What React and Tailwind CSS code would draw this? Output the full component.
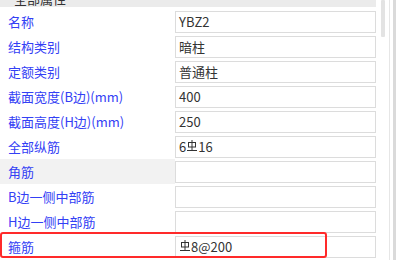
import React from "react";

const rows = [
  { label: "名称", value: "YBZ2" },
  { label: "结构类别", value: "暗柱" },
  { label: "定额类别", value: "普通柱" },
  { label: "截面宽度(B边)(mm)", value: "400" },
  { label: "截面高度(H边)(mm)", value: "250" },
  { label: "全部纵筋", value: ["6", "bar", "16"] },
  { label: "角筋", value: "", hover: true },
  { label: "B边一侧中部筋", value: "" },
  { label: "H边一侧中部筋", value: "" },
  { label: "箍筋", value: ["bar", "8@200"], marked: true },
];

const BarSymbol = () => (
  <svg width="10" height="12" viewBox="0 0 10 12" className="inline-block mx-[1px] -mt-[2px]">
    <rect x="1.5" y="2.5" width="7" height="4.5" fill="none" stroke="#333" strokeWidth="1" />
    <line x1="5" y1="0" x2="5" y2="11" stroke="#333" strokeWidth="1" />
    <line x1="0" y1="10.5" x2="10" y2="10.5" stroke="#333" strokeWidth="1" />
  </svg>
);

const Value = ({ value }) => {
  if (Array.isArray(value)) {
    return value.map((v, i) => (v === "bar" ? <BarSymbol key={i} /> : <span key={i}>{v}</span>));
  }
  return value;
};

export default function App() {
  return (
    <div className="w-[396px] h-[260px] overflow-hidden bg-white flex font-['Noto_Sans_CJK_SC','Microsoft_YaHei',sans-serif] text-[13px]">
      <div className="w-[376px] flex flex-col">
        <div className="h-[7px] bg-[#ebebeb] overflow-hidden pl-[14px]">
          <div className="-mt-[11px] text-[13px] text-[#333]">全部属性</div>
        </div>
        <div className="pt-[2px] flex flex-col">
          {rows.map((row) => (
            <div key={row.label} className="relative h-[25px] flex items-center">
              <div
                className={`w-[175px] h-full flex items-center pl-[8px] text-[#3340f5] ${row.hover ? "bg-[#f2f2f2]" : ""}`}
              >
                {row.label}
              </div>
              <div className="w-[201px] h-[22px] border border-[#dcdcdc] bg-white flex items-center pl-[3px] text-[#333] leading-none">
                <Value value={row.value} />
              </div>
              {row.marked && (
                <div className="absolute left-0 top-[-2px] w-[327px] h-[26px] border-2 border-[#ff2a2a] rounded-[3px]" />
              )}
            </div>
          ))}
        </div>
      </div>
      <div className="w-[20px] flex">
        <div className="w-[5px]" />
        <div className="w-[4px] h-[37px] bg-[#e3e3e3] rounded-[1px]" />
        <div className="w-[4px]" />
        <div className="w-px bg-[#e6e6e6]" />
        <div className="w-[3px]" />
        <div className="w-[3px] bg-[#dadada]" />
      </div>
    </div>
  );
}
